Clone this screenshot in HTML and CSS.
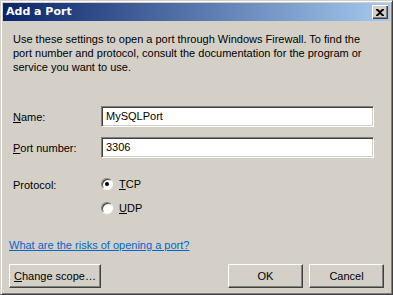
FILE: index.html
```html
<!DOCTYPE html>
<html>
<head>
<meta charset="utf-8">
<title>Add a Port</title>
<link rel="stylesheet" href="styles.css">
</head>
<body>
<div class="window">
  <div class="titlebar">
    <span class="title">Add a Port</span>
    <span class="close"><svg width="8" height="7" viewBox="0 0 8 7"><path d="M0 0h2l2 2 2-2h2v1L5 3.5 8 6v1H6L4 5 2 7H0V6l3-2.5L0 1z" fill="#000"/></svg></span>
  </div>
  <div class="content">
    <p class="desc">Use these settings to open a port through Windows Firewall. To find the port number and protocol, consult the documentation for the program or service you want to use.</p>
    <div class="form">
      <label class="lbl"><u>N</u>ame:</label>
      <div class="textbox">MySQLPort</div>
      <label class="lbl"><u>P</u>ort number:</label>
      <div class="textbox">3306</div>
      <label class="lbl proto">Protocol:</label>
      <div class="radios">
        <div class="radio-row"><span class="radio checked"></span><span><u>T</u>CP</span></div>
        <div class="radio-row"><span class="radio"></span><span><u>U</u>DP</span></div>
      </div>
    </div>
    <a class="link" href="#">What are the risks of opening a port?</a>
    <div class="buttons">
      <div class="btn scope"><u>C</u>hange scope…</div>
      <div class="spacer"></div>
      <div class="btn">OK</div>
      <div class="btn">Cancel</div>
    </div>
  </div>
</div>
</body>
</html>
```
FILE: styles.css
```css
html, body {
  margin: 0;
  padding: 0;
  background: #d4d0c8;
}
.window {
  width: 393px;
  height: 295px;
  box-sizing: border-box;
  border: 1px solid;
  border-color: #d4d0c8 #404040 #404040 #d4d0c8;
  box-shadow: inset 1px 1px 0 #ffffff, inset -1px -1px 0 #808080;
  padding: 2px;
  background: #d4d0c8;
  font-family: "Liberation Sans", Arial, sans-serif;
  font-size: 11px;
  color: #000;
  display: flex;
  flex-direction: column;
}
.titlebar {
  height: 18px;
  background: linear-gradient(to right, #0a246a, #a6caf0);
  display: flex;
  align-items: flex-start;
  justify-content: space-between;
}
.title {
  color: #fff;
  font-weight: bold;
  font-family: "DejaVu Sans", sans-serif;
  font-size: 11px;
  line-height: 18px;
  padding-left: 3px;
}
.close {
  width: 16px;
  height: 14px;
  margin: 2px 2px 0 0;
  box-sizing: border-box;
  background: #d4d0c8;
  box-shadow: inset 1px 1px 0 #ffffff, inset -1px -1px 0 #404040, inset -2px -2px 0 #808080;
  display: flex;
  align-items: center;
  justify-content: center;
}
.close svg { display: block; margin-left: -1px; }
.content {
  padding: 0 6px;
  display: flex;
  flex-direction: column;
}
.desc {
  margin: 11px 0 0 4px;
  line-height: 14px;
  width: 362px;
}
.form {
  display: grid;
  grid-template-columns: 88px 273px;
  row-gap: 10px;
  margin: 32px 0 0 4px;
  align-items: center;
}
.textbox {
  height: 21px;
  box-sizing: border-box;
  background: #fff;
  border: 1px solid;
  border-color: #808080 #ffffff #ffffff #808080;
  box-shadow: inset 1px 1px 0 #404040, inset -1px -1px 0 #d4d0c8;
  padding: 0 4px;
  line-height: 19px;
}
.lbl.proto { align-self: start; margin-top: 11px; }
.radios {
  display: flex;
  flex-direction: column;
  gap: 11px;
  margin-top: 9px;
}
.radio-row {
  display: flex;
  align-items: center;
  gap: 6px;
  height: 13px;
}
.radio {
  width: 12px;
  height: 12px;
  border-radius: 50%;
  box-sizing: border-box;
  background: #fff;
  border: 1px solid;
  border-color: #808080 #ffffff #ffffff #808080;
  box-shadow: inset 1px 1px 0 #404040;
  position: relative;
}
.radio.checked::after {
  content: "";
  position: absolute;
  left: 3px;
  top: 3px;
  width: 4px;
  height: 4px;
  border-radius: 50%;
  background: #000;
}
.link {
  margin-top: 24px;
  color: #0066cc;
  text-decoration: underline;
  line-height: 14px;
  align-self: flex-start;
}
.buttons {
  display: flex;
  gap: 6px;
  margin-top: 12px;
}
.spacer { flex: 1; }
.btn {
  width: 75px;
  height: 24px;
  box-sizing: border-box;
  border: 1px solid;
  border-color: #ffffff #404040 #404040 #ffffff;
  box-shadow: inset -1px -1px 0 #808080;
  display: flex;
  align-items: center;
  justify-content: center;
}
.btn.scope { width: 92px; }
```
